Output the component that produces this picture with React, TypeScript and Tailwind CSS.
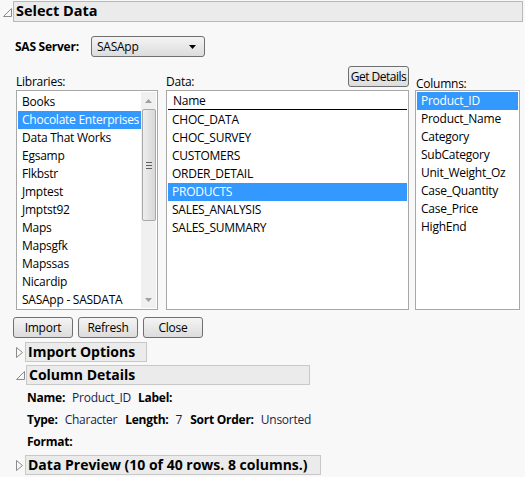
import { ReactNode } from "react";

const libraries = [
    "Books",
    "Chocolate Enterprises 2",
    "Data That Works",
    "Egsamp",
    "Flkbstr",
    "Jmptest",
    "Jmptst92",
    "Maps",
    "Mapsgfk",
    "Mapssas",
    "Nicardip",
    "SASApp - SASDATA",
];

const tables = ["CHOC_DATA", "CHOC_SURVEY", "CUSTOMERS", "ORDER_DETAIL", "PRODUCTS", "SALES_ANALYSIS", "SALES_SUMMARY"];

const columns = ["Product_ID", "Product_Name", "Category", "SubCategory", "Unit_Weight_Oz", "Case_Quantity", "Case_Price", "HighEnd"];

function OpenTriangle() {
    return (
        <svg width="11" height="11" viewBox="0 0 11 11" className="shrink-0">
            <polygon points="1.5,9.5 9.5,9.5 9.5,1.5" fill="none" stroke="#8a8a8a" strokeWidth="1" />
        </svg>
    );
}

function ClosedTriangle() {
    return (
        <svg width="9" height="13" viewBox="0 0 9 13" className="shrink-0">
            <polygon points="1.5,1.5 1.5,11.5 7.5,6.5" fill="none" stroke="#8a8a8a" strokeWidth="1" />
        </svg>
    );
}

function Button({ children, className = "" }: { children: ReactNode; className?: string }) {
    return (
        <div
            className={`h-[21px] flex items-center justify-center whitespace-nowrap rounded-[3px] border border-[#707070] bg-gradient-to-b from-[#f4f4f4] to-[#dcdcdc] text-[12px] text-black ${className}`}
        >
            {children}
        </div>
    );
}

function ListItem({ text, selected }: { text: string; selected?: boolean }) {
    return (
        <div
            className={`h-[18px] leading-[18px] pl-[4px] whitespace-nowrap overflow-hidden ${selected ? "bg-[#3399ff] text-white" : "text-black"}`}
        >
            {text}
        </div>
    );
}

function Bold({ children }: { children: ReactNode }) {
    return <span className="font-bold text-black">{children}</span>;
}

function Val({ children }: { children: ReactNode }) {
    return <span className="text-[#1c1c4c]">{children}</span>;
}

export default function App() {
    return (
        <div
            className="w-[525px] h-[477px] overflow-hidden bg-[#f8f8f8] text-[12px] tracking-[-0.25px] text-black"
            style={{ fontFamily: '"Open Sans", "Noto Sans", sans-serif' }}
        >
            {/* Select Data header */}
            <div className="flex items-center pt-[1px] pr-[2px]">
                <div className="w-[13px] pl-[2px] pt-[2px]">
                    <OpenTriangle />
                </div>
                <div className="flex-1 h-[21px] bg-[#ebebeb] border border-[#b8b8b8] flex items-center pl-[2px]">
                    <span className="text-[14.5px] font-bold leading-none tracking-normal">Select Data</span>
                </div>
            </div>

            {/* server */}
            <div className="flex items-center mt-[14px] pl-[15px]">
                <span className="font-bold w-[76px]">SAS Server:</span>
                <div className="w-[114px] h-[21px] rounded-[3px] border border-[#707070] bg-gradient-to-b from-[#f4f4f4] to-[#dcdcdc] flex items-center justify-between pl-[5px] pr-[8px]">
                    <span>SASApp</span>
                    <svg width="7" height="4" viewBox="0 0 7 4">
                        <polygon points="0,0 7,0 3.5,4" fill="#000" />
                    </svg>
                </div>
            </div>

            {/* lists */}
            <div className="flex mt-[9px] pl-[16px]">
                <div className="flex flex-col w-[142px]">
                    <div className="h-[24px] flex items-end pb-[2px] leading-none">Libraries:</div>
                    <div className="h-[220px] bg-white border border-[#a8a8a8] flex p-[1px]">
                        <div className="flex-1 min-w-0 pt-[1px]">
                            {libraries.map((l, i) => (
                                <ListItem key={l} text={l} selected={i === 1} />
                            ))}
                        </div>
                        <div className="w-[15px] bg-[#f0f0f0] flex flex-col items-center">
                            <div className="h-[17px] flex items-center justify-center">
                                <svg width="7" height="4" viewBox="0 0 7 4">
                                    <polygon points="0,4 7,4 3.5,0" fill="#a0a0a0" />
                                </svg>
                            </div>
                            <div className="w-[14px] h-[112px] rounded-[2px] border border-[#a8a8a8] bg-gradient-to-r from-[#eeeeee] to-[#d8d8d8] flex flex-col items-center justify-center gap-[2px]">
                                <div className="w-[6px] h-[1px] bg-[#606060]" />
                                <div className="w-[6px] h-[1px] bg-[#606060]" />
                                <div className="w-[6px] h-[1px] bg-[#606060]" />
                            </div>
                            <div className="flex-1" />
                            <div className="h-[17px] flex items-center justify-center">
                                <svg width="7" height="4" viewBox="0 0 7 4">
                                    <polygon points="0,0 7,0 3.5,4" fill="#a0a0a0" />
                                </svg>
                            </div>
                        </div>
                    </div>
                </div>

                <div className="flex flex-col w-[243px] ml-[8px]">
                    <div className="h-[24px] flex items-end justify-between">
                        <span className="pb-[2px] leading-none">Data:</span>
                        <Button className="w-[61px] mb-[3px] tracking-[-0.5px]">Get Details</Button>
                    </div>
                    <div className="h-[220px] bg-white border border-[#a8a8a8] p-[1px]">
                        <div className="h-[18px] leading-[18px] pl-[5px] border-b border-black">Name</div>
                        <div className="pt-[1px]">
                            {tables.map((t, i) => (
                                <ListItem key={t} text={t} selected={i === 4} />
                            ))}
                        </div>
                    </div>
                </div>

                <div className="flex flex-col w-[105px] ml-[6px]">
                    <div className="h-[24px] flex items-end pl-[1px] leading-none">Columns:</div>
                    <div className="h-[220px] bg-white border border-[#a8a8a8] p-[1px]">
                        {columns.map((c, i) => (
                            <ListItem key={c} text={c} selected={i === 0} />
                        ))}
                    </div>
                </div>
            </div>

            {/* buttons */}
            <div className="flex gap-[5px] mt-[7px] pl-[13px]">
                <Button className="w-[60px]">Import</Button>
                <Button className="w-[60px]">Refresh</Button>
                <Button className="w-[60px]">Close</Button>
            </div>

            {/* Import Options */}
            <div className="flex items-center mt-[4px] pl-[15px] gap-[1px]">
                <ClosedTriangle />
                <div className="w-[122px] h-[20px] bg-[#ebebeb] border border-[#c8c8c8] flex items-center pl-[2px]">
                    <span className="text-[14px] font-bold leading-none tracking-normal">Import Options</span>
                </div>
            </div>

            {/* Column Details */}
            <div className="flex items-center mt-[3px] pl-[15px]">
                <OpenTriangle />
                <div className="w-[284px] h-[20px] bg-[#ebebeb] border border-[#c8c8c8] flex items-center pl-[2px]">
                    <span className="text-[14px] font-bold leading-none tracking-normal">Column Details</span>
                </div>
            </div>

            <div className="pl-[27px] mt-[4px] flex flex-col gap-[4px] leading-[18px]">
                <div className="flex">
                    <Bold>Name:</Bold>
                    <span className="ml-[7px]"><Val>Product_ID</Val></span>
                    <span className="ml-[7px]"><Bold>Label:</Bold></span>
                </div>
                <div className="flex">
                    <Bold>Type:</Bold>
                    <span className="ml-[7px]"><Val>Character</Val></span>
                    <span className="ml-[8px]"><Bold>Length:</Bold></span>
                    <span className="ml-[7px]"><Val>7</Val></span>
                    <span className="ml-[8px]"><Bold>Sort Order:</Bold></span>
                    <span className="ml-[7px]"><Val>Unsorted</Val></span>
                </div>
                <div className="flex">
                    <Bold>Format:</Bold>
                </div>
            </div>

            {/* Data Preview */}
            <div className="flex items-center mt-[4px] pl-[15px] gap-[1px]">
                <ClosedTriangle />
                <div className="w-[296px] h-[20px] bg-[#ebebeb] border border-[#c8c8c8] flex items-center pl-[2px]">
                    <span className="text-[14px] font-bold leading-none tracking-normal">Data Preview (10 of 40 rows. 8 columns.)</span>
                </div>
            </div>
        </div>
    );
}
